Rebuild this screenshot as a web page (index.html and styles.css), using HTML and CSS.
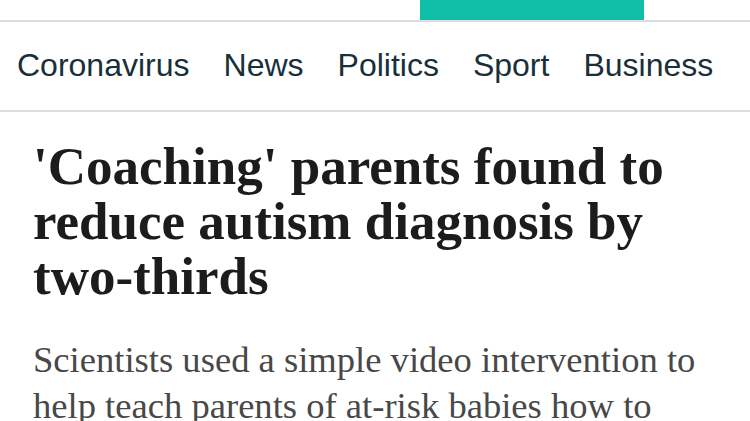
FILE: index.html
```html
<!DOCTYPE html>
<html>
<head>
<meta charset="utf-8">
<link rel="stylesheet" href="styles.css">
</head>
<body>
<div class="topbar"><div class="tab"></div></div>
<nav class="nav">
  <a>Coronavirus</a>
  <a>News</a>
  <a>Politics</a>
  <a>Sport</a>
  <a>Business</a>
</nav>
<article class="article">
  <h1 class="headline">'Coaching' parents found to reduce autism diagnosis by two-thirds</h1>
  <p class="standfirst">Scientists used a simple video intervention to help teach parents of at-risk babies how to</p>
</article>
</body>
</html>
```
FILE: styles.css
```css
html, body {
  margin: 0;
  padding: 0;
  background: #fff;
  overflow: hidden;
}
.topbar {
  display: flex;
  height: 20px;
  padding-left: 420px;
  border-bottom: 2px solid #dcdcdc;
}
.tab {
  width: 224px;
  height: 20px;
  background: #10bfa7;
}
.nav {
  display: flex;
  align-items: center;
  gap: 34px;
  height: 86px;
  padding: 0 0 2px 17px;
  border-bottom: 2px solid #dcdcdc;
  font-family: "Liberation Sans", sans-serif;
  font-size: 32px;
  color: #18303a;
  white-space: nowrap;
}
.article {
  padding: 0 10px 0 33px;
}
.headline {
  margin: 27px 0 0;
  font-family: "Liberation Serif", serif;
  font-weight: bold;
  font-size: 53px;
  line-height: 55px;
  color: #1c1c1c;
}
.standfirst {
  margin: 33px 0 0;
  font-family: "Liberation Serif", serif;
  font-size: 36.6px;
  line-height: 46px;
  color: #484848;
}
```
